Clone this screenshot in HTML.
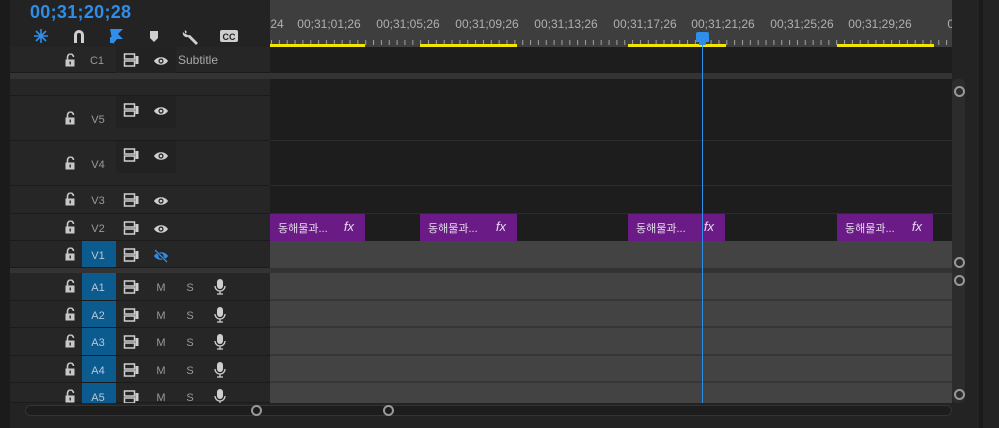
<!DOCTYPE html>
<html><head><meta charset="utf-8"><style>
*{margin:0;padding:0;box-sizing:border-box}
body{width:999px;height:428px;background:#1d1d1d;position:relative;overflow:hidden;font-family:"Liberation Sans","Noto Sans CJK KR",sans-serif}
.a{position:absolute}
.hdr{background:#262626;border-bottom:1px solid #1b1b1b}
.lbl{position:absolute;color:#9a9a9a;font-size:11px;transform:translate(-50%,-50%)}
.ic{position:absolute;transform:translate(-50%,-50%)}
.rl{position:absolute;top:17px;color:#b0b0b0;font-size:12px;transform:translateX(-50%);white-space:nowrap}
.clip{position:absolute;top:214px;height:27px;background:#6a1b86;color:#e6dcea;font-size:11px}
.clip span{position:absolute;left:8px;top:6px}
.clip i{position:absolute;right:11px;top:5px;font-size:13px;font-family:"Liberation Sans",sans-serif}
.yl{position:absolute;top:44px;height:3px;background:#f2e600}
.row{position:absolute;left:270px;width:682px}
</style></head><body>
<div class="a" style="left:0;top:0;width:10px;height:428px;background:#1b1b1b"></div>
<div class="a" style="left:10px;top:0;width:260px;height:47px;background:#232323"></div>
<div class="a" style="left:30px;top:2px;color:#2e8ee8;font-size:18px;font-weight:bold;letter-spacing:0.3px">00;31;20;28</div>
<svg class="a" style="left:30px;top:26px" width="220" height="20" viewBox="0 0 220 20">
 <g stroke="#2e8ee8" stroke-width="1.6" fill="none"><path d="M11 3v14M4 10h14M6 5l10 10M16 5L6 15"/></g>
 <path d="M44 17V9a5 5 0 0 1 10 0v8h-3V9a2 2 0 0 0-4 0v8z" fill="#cfcfcf"/>
 <path d="M80 3h13l-5 5 5 5h-6l-4 5z" fill="#2e8ee8"/><path d="M80 11h3v6h-3z" fill="#2e8ee8"/>
 <path d="M120 5h8v7l-4 4-4-4z" fill="#cfcfcf"/>
 <path d="M155 4a4 4 0 0 0 5 5l8 8-2 2-8-8a4 4 0 0 1-5-5l2 2 2-2z" fill="#cfcfcf"/>
 <rect x="190" y="4" width="18" height="12" rx="2" fill="#cfcfcf"/>
 <text x="199" y="14" font-size="9" font-weight="bold" fill="#232323" text-anchor="middle" font-family="Liberation Sans">CC</text>
</svg>
<div class="a" style="left:270px;top:0;width:682px;height:47px;background:#3e3e3e"></div>
<svg class="a" style="left:270px;top:38px" width="682" height="7">
 <defs><pattern id="t" width="7.85" height="7" patternUnits="userSpaceOnUse"><rect x="1" y="2" width="1" height="5" fill="#a0a0a0"/></pattern></defs>
 <rect width="682" height="7" fill="url(#t)"/>
</svg>
<div class="rl" style="left:277px">24</div>
<div class="rl" style="left:329px">00;31;01;26</div>
<div class="rl" style="left:408px">00;31;05;26</div>
<div class="rl" style="left:487px">00;31;09;26</div>
<div class="rl" style="left:566px">00;31;13;26</div>
<div class="rl" style="left:645px">00;31;17;26</div>
<div class="rl" style="left:723px">00;31;21;26</div>
<div class="rl" style="left:802px">00;31;25;26</div>
<div class="rl" style="left:880px">00;31;29;26</div>
<div class="rl" style="left:959px">00;3</div>
<div class="a" style="left:952px;top:0;width:47px;height:47px;background:#232323"></div>
<div class="yl" style="left:270px;width:95px"></div>
<div class="yl" style="left:420px;width:97px"></div>
<div class="yl" style="left:628px;width:98px"></div>
<div class="yl" style="left:837px;width:97px"></div>

<div class="a hdr" style="left:10px;top:47px;width:260px;height:26px"></div>
<div class="a" style="left:10px;top:73px;width:942px;height:6px;background:#333"></div>
<div class="a hdr" style="left:10px;top:79px;width:260px;height:17px"></div>
<div class="a hdr" style="left:10px;top:96px;width:260px;height:45px"></div>
<div class="a hdr" style="left:10px;top:141px;width:260px;height:45px"></div>
<div class="a hdr" style="left:10px;top:186px;width:260px;height:28px"></div>
<div class="a hdr" style="left:10px;top:214px;width:260px;height:27px"></div>
<div class="a hdr" style="left:10px;top:241px;width:260px;height:27px"></div>
<div class="a" style="left:10px;top:268px;width:942px;height:5px;background:#333"></div>
<div class="a hdr" style="left:10px;top:273px;width:260px;height:28px"></div>
<div class="a hdr" style="left:10px;top:301px;width:260px;height:27px"></div>
<div class="a hdr" style="left:10px;top:328px;width:260px;height:28px"></div>
<div class="a hdr" style="left:10px;top:356px;width:260px;height:27px"></div>
<div class="a hdr" style="left:10px;top:383px;width:260px;height:20px"></div>
<div class="a" style="left:116px;top:47px;width:60px;height:26px;background:#222"></div>
<div class="a" style="left:116px;top:96px;width:60px;height:32px;background:#222"></div>
<div class="a" style="left:116px;top:141px;width:60px;height:32px;background:#222"></div>
<div class="a" style="left:82px;top:241px;width:34px;height:26px;background:#0c5b8f"></div>
<div class="a" style="left:82px;top:273px;width:34px;height:27px;background:#0c5b8f"></div>
<div class="a" style="left:82px;top:301px;width:34px;height:26px;background:#0c5b8f"></div>
<div class="a" style="left:82px;top:328px;width:34px;height:27px;background:#0c5b8f"></div>
<div class="a" style="left:82px;top:356px;width:34px;height:26px;background:#0c5b8f"></div>
<div class="a" style="left:82px;top:383px;width:34px;height:20px;background:#0c5b8f"></div>

<svg width="0" height="0" style="position:absolute"><defs>
 <g id="lk"><path d="M2 6V3.5a3 3 0 0 1 6 0" stroke="#c8c8c8" stroke-width="1.6" fill="none"/><rect x="0" y="6" width="9" height="7" fill="#c8c8c8"/><rect x="4" y="8" width="1.4" height="3" fill="#262626"/></g>
 <g id="to"><rect x="1" y="1" width="10" height="5" fill="none" stroke="#cfcfcf" stroke-width="1.5"/><rect x="1" y="8" width="10" height="5" fill="none" stroke="#cfcfcf" stroke-width="1.5"/><rect x="12" y="3" width="3" height="8" fill="#cfcfcf"/></g>
 <g id="ey"><path d="M0 6C3 1 11 1 14 6C11 11 3 11 0 6z" fill="#cfcfcf"/><circle cx="7" cy="6" r="2.6" fill="#262626"/><circle cx="7" cy="6" r="1.3" fill="#cfcfcf"/></g>
 <g id="mc"><rect x="3" y="0" width="6" height="10" rx="3" fill="#cfcfcf"/><path d="M1 7a5 5 0 0 0 10 0M6 12v3M3 15h6" stroke="#cfcfcf" stroke-width="1.3" fill="none"/></g>
</defs></svg>

<svg class="ic" style="left:70px;top:60px" width="9" height="13"><use href="#lk"/></svg>
<div class="lbl" style="left:97px;top:61px">C1</div>
<svg class="ic" style="left:131px;top:60px" width="15" height="14"><use href="#to"/></svg>
<svg class="ic" style="left:161px;top:61px" width="14" height="12"><use href="#ey"/></svg>
<div class="a" style="left:178px;top:53px;color:#aaa;font-size:12px">Subtitle</div>
<svg class="ic" style="left:70px;top:118px" width="9" height="13"><use href="#lk"/></svg>
<div class="lbl" style="left:98px;top:120px">V5</div>
<svg class="ic" style="left:131px;top:110px" width="15" height="14"><use href="#to"/></svg>
<svg class="ic" style="left:161px;top:111px" width="14" height="12"><use href="#ey"/></svg>
<svg class="ic" style="left:70px;top:163px" width="9" height="13"><use href="#lk"/></svg>
<div class="lbl" style="left:98px;top:165px">V4</div>
<svg class="ic" style="left:131px;top:155px" width="15" height="14"><use href="#to"/></svg>
<svg class="ic" style="left:161px;top:156px" width="14" height="12"><use href="#ey"/></svg>
<svg class="ic" style="left:70px;top:199px" width="9" height="13"><use href="#lk"/></svg>
<div class="lbl" style="left:98px;top:201px">V3</div>
<svg class="ic" style="left:131px;top:200px" width="15" height="14"><use href="#to"/></svg>
<svg class="ic" style="left:161px;top:201px" width="14" height="12"><use href="#ey"/></svg>
<svg class="ic" style="left:70px;top:227px" width="9" height="13"><use href="#lk"/></svg>
<div class="lbl" style="left:98px;top:229px">V2</div>
<svg class="ic" style="left:131px;top:228px" width="15" height="14"><use href="#to"/></svg>
<svg class="ic" style="left:161px;top:229px" width="14" height="12"><use href="#ey"/></svg>
<svg class="ic" style="left:70px;top:254px" width="9" height="13"><use href="#lk"/></svg>
<div class="lbl" style="left:98px;top:256px;color:#b8c8d8">V1</div>
<svg class="ic" style="left:131px;top:255px" width="15" height="14"><use href="#to"/></svg>
<svg class="ic" style="left:161px;top:256px" width="16" height="14" viewBox="0 0 16 14"><path d="M1 7C4 2 12 2 15 7C12 12 4 12 1 7z" fill="#2e8ee8"/><circle cx="8" cy="7" r="2.6" fill="#262626"/><path d="M2 1l12 12" stroke="#262626" stroke-width="2.5"/><path d="M2 1l12 12" stroke="#2e8ee8" stroke-width="1.3"/></svg>

<svg class="ic" style="left:70px;top:286px" width="9" height="13"><use href="#lk"/></svg>
<div class="lbl" style="left:98px;top:288px;color:#b8c8d8">A1</div>
<svg class="ic" style="left:131px;top:287px" width="15" height="14"><use href="#to"/></svg>
<div class="lbl" style="left:161px;top:288px">M</div><div class="lbl" style="left:190px;top:288px">S</div>
<svg class="ic" style="left:220px;top:287px" width="12" height="16"><use href="#mc"/></svg>
<svg class="ic" style="left:70px;top:314px" width="9" height="13"><use href="#lk"/></svg>
<div class="lbl" style="left:98px;top:316px;color:#b8c8d8">A2</div>
<svg class="ic" style="left:131px;top:315px" width="15" height="14"><use href="#to"/></svg>
<div class="lbl" style="left:161px;top:316px">M</div><div class="lbl" style="left:190px;top:316px">S</div>
<svg class="ic" style="left:220px;top:315px" width="12" height="16"><use href="#mc"/></svg>
<svg class="ic" style="left:70px;top:341px" width="9" height="13"><use href="#lk"/></svg>
<div class="lbl" style="left:98px;top:343px;color:#b8c8d8">A3</div>
<svg class="ic" style="left:131px;top:342px" width="15" height="14"><use href="#to"/></svg>
<div class="lbl" style="left:161px;top:343px">M</div><div class="lbl" style="left:190px;top:343px">S</div>
<svg class="ic" style="left:220px;top:342px" width="12" height="16"><use href="#mc"/></svg>
<svg class="ic" style="left:70px;top:369px" width="9" height="13"><use href="#lk"/></svg>
<div class="lbl" style="left:98px;top:371px;color:#b8c8d8">A4</div>
<svg class="ic" style="left:131px;top:370px" width="15" height="14"><use href="#to"/></svg>
<div class="lbl" style="left:161px;top:371px">M</div><div class="lbl" style="left:190px;top:371px">S</div>
<svg class="ic" style="left:220px;top:370px" width="12" height="16"><use href="#mc"/></svg>
<svg class="ic" style="left:70px;top:396px" width="9" height="13"><use href="#lk"/></svg>
<div class="lbl" style="left:98px;top:398px;color:#b8c8d8">A5</div>
<svg class="ic" style="left:131px;top:397px" width="15" height="14"><use href="#to"/></svg>
<div class="lbl" style="left:161px;top:398px">M</div><div class="lbl" style="left:190px;top:398px">S</div>
<svg class="ic" style="left:220px;top:397px" width="12" height="16"><use href="#mc"/></svg>

<div class="row" style="top:47px;height:26px;background:#1d1d1d"></div>
<div class="row" style="top:79px;height:62px;background:#1d1d1d;border-bottom:1px solid #2c2c2c"></div>
<div class="row" style="top:141px;height:45px;background:#1d1d1d;border-bottom:1px solid #2c2c2c"></div>
<div class="row" style="top:186px;height:28px;background:#1d1d1d;border-bottom:1px solid #2c2c2c"></div>
<div class="row" style="top:214px;height:27px;background:#1d1d1d"></div>
<div class="row" style="top:241px;height:27px;background:#434343"></div>
<div class="row" style="top:273px;height:28px;background:#434343;border-bottom:2px solid #363636"></div>
<div class="row" style="top:301px;height:27px;background:#434343;border-bottom:2px solid #363636"></div>
<div class="row" style="top:328px;height:28px;background:#434343;border-bottom:2px solid #363636"></div>
<div class="row" style="top:356px;height:27px;background:#434343;border-bottom:2px solid #363636"></div>
<div class="row" style="top:383px;height:20px;background:#434343"></div>

<div class="clip" style="left:270px;width:95px"><span>동해물과...</span><i>fx</i></div>
<div class="clip" style="left:420px;width:97px"><span>동해물과...</span><i>fx</i></div>
<div class="clip" style="left:628px;width:97px"><span>동해물과...</span><i>fx</i></div>
<div class="clip" style="left:837px;width:96px"><span>동해물과...</span><i>fx</i></div>

<div class="a" style="left:10px;top:403px;width:942px;height:25px;background:#232323"></div>
<div class="a" style="left:25px;top:405px;width:927px;height:11px;border-radius:6px;background:#1d1d1d;border:1px solid #333"></div>
<div class="a" style="left:251px;top:405px;width:11px;height:11px;border-radius:50%;border:2px solid #999"></div>
<div class="a" style="left:383px;top:405px;width:11px;height:11px;border-radius:50%;border:2px solid #999"></div>

<div class="a" style="left:952px;top:47px;width:47px;height:381px;background:#232323"></div>
<div class="a" style="left:952px;top:79px;width:13px;height:324px;background:#2c2c2c;border-radius:5px"></div>
<div class="a" style="left:979px;top:0;width:4px;height:428px;background:#1a1a1a"></div>
<div class="a" style="left:954px;top:86px;width:11px;height:11px;border-radius:50%;border:2px solid #999"></div>
<div class="a" style="left:954px;top:257px;width:11px;height:11px;border-radius:50%;border:2px solid #999"></div>
<div class="a" style="left:954px;top:275px;width:11px;height:11px;border-radius:50%;border:2px solid #999"></div>
<div class="a" style="left:954px;top:389px;width:11px;height:11px;border-radius:50%;border:2px solid #999"></div>

<div class="a" style="left:702px;top:40px;width:1px;height:363px;background:#2e8ee8"></div>
<div class="a" style="left:696px;top:32px;width:13px;height:10px;background:#2e8ee8;border-radius:2px 2px 0 0"></div>
<div class="a" style="left:699px;top:41px;width:7px;height:4px;background:#2e8ee8"></div>
</body></html>
